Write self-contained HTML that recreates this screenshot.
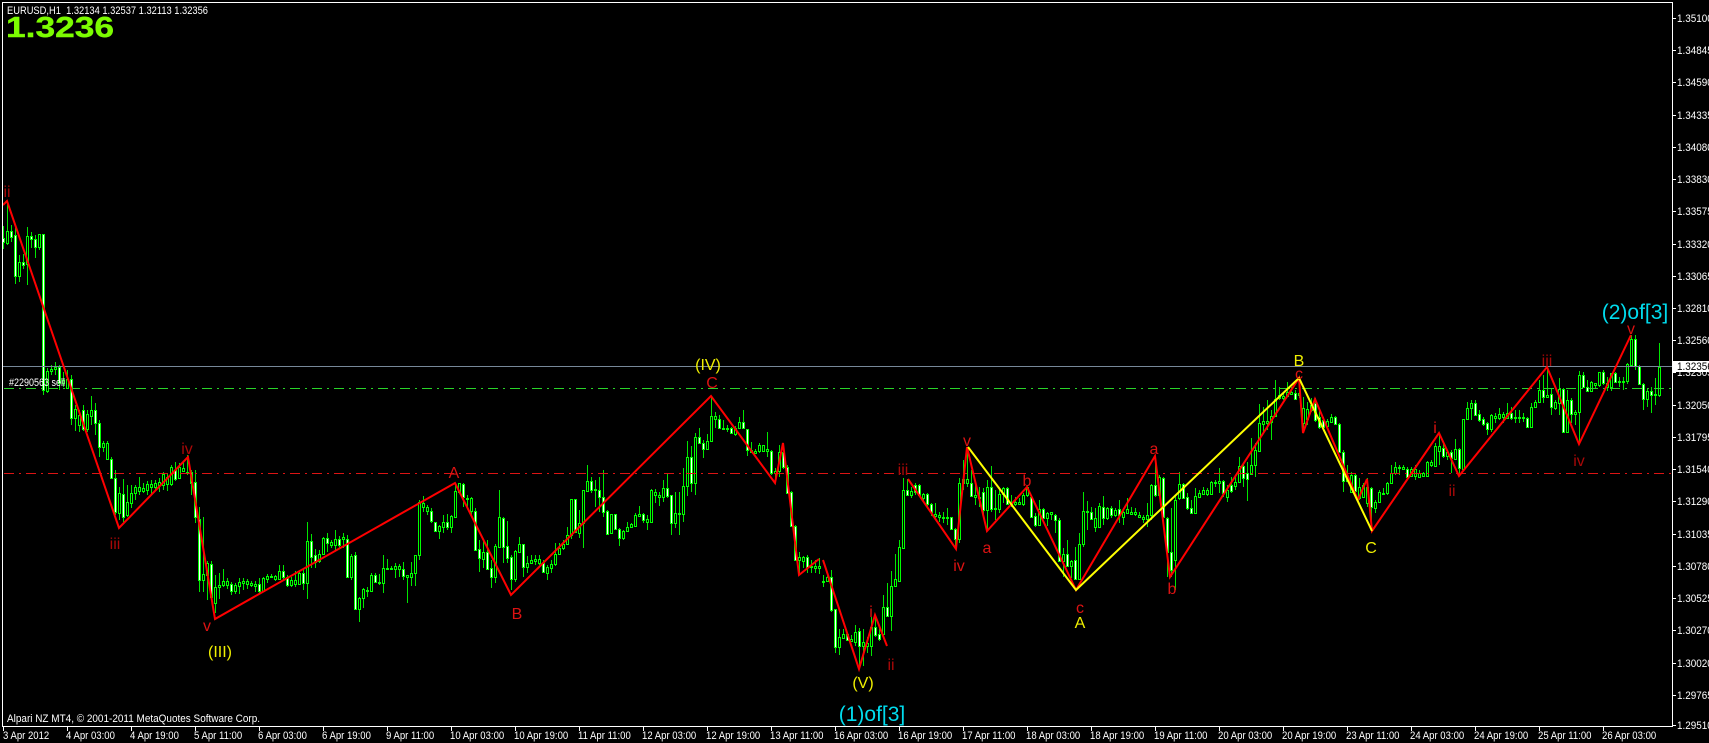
<!DOCTYPE html>
<html><head><meta charset="utf-8"><title>EURUSD,H1</title>
<style>
html,body{margin:0;padding:0;background:#000;width:1709px;height:743px;overflow:hidden}
svg{position:absolute;left:0;top:0;display:block}
text{font-family:"Liberation Sans",sans-serif}
.w{fill:#fff;font-size:11px}
.r{fill:#dc1212;font-size:16px;text-anchor:middle}
.d{fill:#a80808;font-size:16px;text-anchor:middle}
.y{fill:#f0f000;font-size:16px;text-anchor:middle}
.c{fill:#00dcee;font-size:21px;text-anchor:middle}
</style></head><body>
<svg xmlns="http://www.w3.org/2000/svg" width="1709" height="743" viewBox="0 0 1709 743">
<rect width="1709" height="743" fill="#000"/>
<g shape-rendering="crispEdges">
<path stroke="#00e600" fill="none" d="M3.5 226V249M7.5 201V245M11.5 225V242M15.5 228V284M19.5 255V282M23.5 254V269M27.5 227V285M31.5 232V248M35.5 235V258M39.5 234V250M43.5 234V395M47.5 368V393M51.5 365V375M55.5 362V375M59.5 365V390M63.5 372V387M67.5 370V388M71.5 375V425M75.5 405V431M79.5 410V432M83.5 405V431M87.5 410V432M91.5 396V425M95.5 403V435M99.5 420V457M103.5 441V452M107.5 441V460M111.5 457V478M115.5 470V515M119.5 487V520M123.5 479V522M127.5 485V517M131.5 485V508M135.5 485V500M139.5 477V495M143.5 483V493M147.5 481V495M151.5 480V495M155.5 480V490M159.5 478V492M163.5 472V490M167.5 473V491M171.5 465V486M175.5 462V481M179.5 463V479M183.5 462V472M187.5 455V475M191.5 470V495M195.5 470V523M199.5 507V592M203.5 517V592M207.5 561V600M211.5 561V600M215.5 575V613M219.5 573V599M223.5 569V587M227.5 578V589M231.5 582V595M235.5 583V594M239.5 578V594M243.5 578V590M247.5 579V589M251.5 581V587M255.5 581V592M259.5 578V593M263.5 577V592M267.5 574V583M271.5 574V578M275.5 575V581M279.5 565V580M283.5 565V580M287.5 575V587M291.5 577V587M295.5 571V587M299.5 570V585M303.5 568V590M307.5 522V599M311.5 534V568M315.5 549V568M319.5 550V563M323.5 537V555M327.5 533V552M331.5 540V548M335.5 530V550M339.5 536V548M343.5 533V548M347.5 535V578M351.5 554V580M355.5 552V609M359.5 597V622M363.5 588V608M367.5 587V597M371.5 573V592M375.5 573V583M379.5 574V585M383.5 555V593M387.5 559V569M391.5 566V569M395.5 563V578M399.5 564V577M403.5 562V580M407.5 575V603M411.5 562V586M415.5 555V586M419.5 500V560M423.5 496V512M427.5 505V515M431.5 508V523M435.5 522V532M439.5 525V539M443.5 515V533M447.5 514V530M451.5 515V533M455.5 483V517M459.5 483V493M463.5 483V507M467.5 495V507M471.5 497V517M475.5 508V551M479.5 540V572M483.5 540V568M487.5 540V570M491.5 560V588M495.5 544V583M499.5 490V547M503.5 517V563M507.5 521V563M511.5 555V590M515.5 550V582M519.5 537V553M523.5 544V577M527.5 556V573M531.5 555V564M535.5 555V565M539.5 555V565M543.5 560V573M547.5 565V580M551.5 560V573M555.5 543V566M559.5 543V554M563.5 540V550M567.5 527V545M571.5 499V539M575.5 499V533M579.5 510V538M583.5 490V548M587.5 465V491M591.5 477V493M595.5 480V507M599.5 477V512M603.5 470V517M607.5 510V535M611.5 514V534M615.5 514V530M619.5 528V546M623.5 530V540M627.5 522V532M631.5 523V528M635.5 513V527M639.5 506V517M643.5 513V523M647.5 515V530M651.5 489V522M655.5 489V503M659.5 492V506M663.5 480V502M667.5 473V498M671.5 495V535M675.5 492V528M679.5 492V535M683.5 468V522M687.5 441V496M691.5 446V492M695.5 433V495M699.5 428V444M703.5 440V458M707.5 434V450M711.5 396V441M715.5 412V428M719.5 415V428M723.5 420V430M727.5 425V432M731.5 427V434M735.5 426V436M739.5 417V429M743.5 410V429M747.5 429V456M751.5 442V453M755.5 449V454M759.5 443V453M763.5 445V452M767.5 432V457M771.5 450V475M775.5 468V483M779.5 445V477M783.5 443V469M787.5 465V493M791.5 491V527M795.5 525V561M799.5 552V575M803.5 556V568M807.5 555V573M811.5 560V573M815.5 560V573M819.5 558V574M823.5 575V587M827.5 575V582M831.5 570V612M835.5 609V653M839.5 629V655M843.5 629V639M847.5 633V641M851.5 635V642M855.5 625V646M859.5 628V667M863.5 629V666M867.5 637V653M871.5 617V656M875.5 617V637M879.5 627V641M883.5 595V635M887.5 583V617M891.5 571V631M895.5 554V587M899.5 540V582M903.5 478V549M907.5 479V496M911.5 487V498M915.5 483V495M919.5 484V497M923.5 493V501M927.5 493V508M931.5 503V516M935.5 503V520M939.5 512V522M943.5 512V523M947.5 508V525M951.5 517V530M955.5 528V549M959.5 478V543M963.5 460V490M967.5 447V487M971.5 470V497M975.5 482V505M979.5 487V507M983.5 488V518M987.5 480V531M991.5 466V512M995.5 490V520M999.5 488V513M1003.5 487V503M1007.5 487V505M1011.5 495V507M1015.5 497V506M1019.5 498V505M1023.5 493V506M1027.5 487V497M1031.5 495V518M1035.5 513V527M1039.5 500V526M1043.5 508V519M1047.5 512V526M1051.5 512V520M1055.5 514V533M1059.5 518V562M1063.5 548V577M1067.5 540V567M1071.5 560V578M1075.5 547V580M1079.5 533V580M1083.5 492V547M1087.5 501V530M1091.5 507V520M1095.5 508V532M1099.5 503V528M1103.5 496V525M1107.5 507V520M1111.5 506V518M1115.5 508V517M1119.5 500V523M1123.5 508V525M1127.5 498V514M1131.5 507V515M1135.5 508V516M1139.5 512V518M1143.5 515V523M1147.5 503V527M1151.5 484V520M1155.5 456V497M1159.5 475V497M1163.5 477V518M1167.5 517V577M1171.5 508V577M1175.5 495V590M1179.5 472V500M1183.5 483V499M1187.5 493V510M1191.5 500V514M1195.5 488V514M1199.5 490V498M1203.5 487V495M1207.5 488V496M1211.5 481V495M1215.5 480V487M1219.5 468V493M1223.5 480V497M1227.5 485V502M1231.5 477V493M1235.5 477V490M1239.5 457V483M1243.5 463V487M1247.5 462V501M1251.5 438V475M1255.5 443V477M1259.5 404V452M1263.5 407V433M1267.5 400V430M1271.5 410V440M1275.5 380V417M1279.5 387V400M1283.5 392V400M1287.5 382V397M1291.5 387V395M1295.5 390V400M1299.5 378V398M1303.5 397V433M1307.5 402V425M1311.5 398V412M1315.5 398V422M1319.5 410V429M1323.5 417V428M1327.5 419V427M1331.5 414V423M1335.5 416V425M1339.5 423V453M1343.5 450V492M1347.5 465V482M1351.5 472V493M1355.5 473V495M1359.5 478V500M1363.5 483V498M1367.5 478V507M1371.5 487V530M1375.5 500V513M1379.5 490V503M1383.5 488V495M1387.5 482V495M1391.5 465V484M1395.5 462V475M1399.5 465V475M1403.5 465V470M1407.5 467V478M1411.5 467V477M1415.5 465V480M1419.5 470V478M1423.5 472V477M1427.5 461V477M1431.5 460V467M1435.5 443V467M1439.5 433V465M1443.5 442V458M1447.5 450V460M1451.5 450V473M1455.5 439V460M1459.5 448V474M1463.5 419V470M1467.5 402V420M1471.5 400V420M1475.5 400V416M1479.5 410V422M1483.5 417V426M1487.5 422V435M1491.5 414V432M1495.5 413V423M1499.5 408V420M1503.5 412V423M1507.5 403V419M1511.5 407V420M1515.5 410V423M1519.5 410V423M1523.5 413V422M1527.5 417V428M1531.5 403V428M1535.5 400V408M1539.5 380V403M1543.5 375V403M1547.5 367V398M1551.5 388V415M1555.5 400V410M1559.5 378V415M1563.5 388V433M1567.5 390V433M1571.5 398V423M1575.5 410V425M1579.5 371V444M1583.5 372V388M1587.5 380V392M1591.5 381V392M1595.5 383V388M1599.5 372V387M1603.5 370V385M1607.5 377V391M1611.5 373V391M1615.5 372V383M1619.5 377V387M1623.5 377V390M1627.5 363V384M1631.5 335V366M1635.5 335V370M1639.5 365V385M1643.5 383V410M1647.5 388V407M1651.5 387V413M1655.5 378V405M1659.5 343V397"/>
<path stroke="#00ff00" fill="#000" d="M2.5 238.5h2v4h-2zM6.5 231.5h2v12h-2zM10.5 231.5h2v6h-2zM14.5 235.5h2v41h-2zM18.5 262.5h2v14h-2zM22.5 262.5h2v3h-2zM26.5 236.5h2v28h-2zM30.5 236.5h2v3h-2zM34.5 239.5h2v8h-2zM38.5 234.5h2v13h-2zM42.5 234.5h2v156h-2zM46.5 371.5h2v20h-2zM50.5 369.5h2v2h-2zM54.5 367.5h2v2h-2zM58.5 367.5h2v16h-2zM62.5 380.5h2v3h-2zM66.5 379.5h2v9h-2zM70.5 379.5h2v39h-2zM74.5 409.5h2v9h-2zM78.5 415.5h2v10h-2zM82.5 410.5h2v19h-2zM86.5 414.5h2v15h-2zM90.5 410.5h2v6h-2zM94.5 410.5h2v13h-2zM98.5 423.5h2v24h-2zM102.5 443.5h2v4h-2zM106.5 443.5h2v16h-2zM110.5 459.5h2v19h-2zM114.5 478.5h2v34h-2zM118.5 493.5h2v20h-2zM122.5 494.5h2v23h-2zM126.5 502.5h2v13h-2zM130.5 493.5h2v10h-2zM134.5 487.5h2v6h-2zM138.5 487.5h2v4h-2zM142.5 488.5h2v3h-2zM146.5 484.5h2v6h-2zM150.5 484.5h2v3h-2zM154.5 483.5h2v4h-2zM158.5 482.5h2v3h-2zM162.5 474.5h2v11h-2zM166.5 477.5h2v7h-2zM170.5 467.5h2v17h-2zM174.5 470.5h2v9h-2zM178.5 467.5h2v11h-2zM182.5 468.5h2v3h-2zM186.5 472.5h2v1h-2zM190.5 472.5h2v11h-2zM194.5 482.5h2v35h-2zM198.5 519.5h2v61h-2zM202.5 574.5h2v6h-2zM206.5 563.5h2v12h-2zM210.5 564.5h2v33h-2zM214.5 587.5h2v16h-2zM218.5 585.5h2v2h-2zM222.5 581.5h2v4h-2zM226.5 581.5h2v4h-2zM230.5 584.5h2v7h-2zM234.5 585.5h2v6h-2zM238.5 582.5h2v4h-2zM242.5 581.5h2v2h-2zM246.5 581.5h2v3h-2zM250.5 583.5h2v2h-2zM254.5 584.5h2v2h-2zM258.5 584.5h2v7h-2zM262.5 578.5h2v13h-2zM266.5 576.5h2v3h-2zM270.5 576.5h2v1h-2zM274.5 576.5h2v3h-2zM278.5 571.5h2v8h-2zM282.5 571.5h2v6h-2zM286.5 577.5h2v8h-2zM290.5 580.5h2v5h-2zM294.5 580.5h2v4h-2zM298.5 573.5h2v11h-2zM302.5 573.5h2v10h-2zM306.5 541.5h2v42h-2zM310.5 541.5h2v16h-2zM314.5 555.5h2v7h-2zM318.5 554.5h2v7h-2zM322.5 538.5h2v16h-2zM326.5 538.5h2v5h-2zM330.5 542.5h2v3h-2zM334.5 539.5h2v6h-2zM338.5 539.5h2v6h-2zM342.5 537.5h2v2h-2zM346.5 539.5h2v38h-2zM350.5 556.5h2v21h-2zM354.5 555.5h2v54h-2zM358.5 598.5h2v11h-2zM362.5 589.5h2v9h-2zM366.5 590.5h2v1h-2zM370.5 575.5h2v16h-2zM374.5 575.5h2v7h-2zM378.5 582.5h2v1h-2zM382.5 568.5h2v15h-2zM386.5 568.5h2v1h-2zM390.5 568.5h2v1h-2zM394.5 566.5h2v3h-2zM398.5 566.5h2v3h-2zM402.5 569.5h2v7h-2zM406.5 575.5h2v2h-2zM410.5 573.5h2v4h-2zM414.5 555.5h2v18h-2zM418.5 502.5h2v53h-2zM422.5 503.5h2v4h-2zM426.5 507.5h2v4h-2zM430.5 511.5h2v10h-2zM434.5 522.5h2v9h-2zM438.5 526.5h2v5h-2zM442.5 522.5h2v5h-2zM446.5 522.5h2v5h-2zM450.5 516.5h2v11h-2zM454.5 491.5h2v26h-2zM458.5 483.5h2v9h-2zM462.5 484.5h2v13h-2zM466.5 498.5h2v1h-2zM470.5 498.5h2v13h-2zM474.5 511.5h2v39h-2zM478.5 549.5h2v9h-2zM482.5 552.5h2v7h-2zM486.5 552.5h2v17h-2zM490.5 568.5h2v9h-2zM494.5 546.5h2v31h-2zM498.5 517.5h2v30h-2zM502.5 518.5h2v29h-2zM506.5 546.5h2v12h-2zM510.5 557.5h2v22h-2zM514.5 551.5h2v28h-2zM518.5 544.5h2v8h-2zM522.5 544.5h2v23h-2zM526.5 563.5h2v4h-2zM530.5 560.5h2v3h-2zM534.5 559.5h2v2h-2zM538.5 559.5h2v4h-2zM542.5 563.5h2v9h-2zM546.5 567.5h2v6h-2zM550.5 564.5h2v4h-2zM554.5 554.5h2v10h-2zM558.5 548.5h2v6h-2zM562.5 544.5h2v4h-2zM566.5 535.5h2v9h-2zM570.5 499.5h2v36h-2zM574.5 499.5h2v33h-2zM578.5 523.5h2v10h-2zM582.5 490.5h2v33h-2zM586.5 481.5h2v10h-2zM590.5 481.5h2v9h-2zM594.5 489.5h2v1h-2zM598.5 490.5h2v7h-2zM602.5 497.5h2v15h-2zM606.5 511.5h2v23h-2zM610.5 514.5h2v19h-2zM614.5 514.5h2v15h-2zM618.5 529.5h2v9h-2zM622.5 531.5h2v7h-2zM626.5 527.5h2v4h-2zM630.5 524.5h2v3h-2zM634.5 515.5h2v11h-2zM638.5 514.5h2v2h-2zM642.5 514.5h2v6h-2zM646.5 519.5h2v3h-2zM650.5 490.5h2v32h-2zM654.5 492.5h2v3h-2zM658.5 495.5h2v2h-2zM662.5 488.5h2v9h-2zM666.5 488.5h2v8h-2zM670.5 495.5h2v28h-2zM674.5 513.5h2v10h-2zM678.5 513.5h2v1h-2zM682.5 486.5h2v28h-2zM686.5 457.5h2v29h-2zM690.5 457.5h2v26h-2zM694.5 437.5h2v46h-2zM698.5 437.5h2v6h-2zM702.5 443.5h2v6h-2zM706.5 441.5h2v8h-2zM710.5 416.5h2v25h-2zM714.5 416.5h2v3h-2zM718.5 419.5h2v9h-2zM722.5 428.5h2v1h-2zM726.5 428.5h2v1h-2zM730.5 428.5h2v5h-2zM734.5 428.5h2v6h-2zM738.5 422.5h2v6h-2zM742.5 422.5h2v6h-2zM746.5 429.5h2v21h-2zM750.5 450.5h2v2h-2zM754.5 451.5h2v2h-2zM758.5 445.5h2v6h-2zM762.5 445.5h2v6h-2zM766.5 449.5h2v2h-2zM770.5 451.5h2v22h-2zM774.5 471.5h2v2h-2zM778.5 452.5h2v19h-2zM782.5 452.5h2v15h-2zM786.5 467.5h2v26h-2zM790.5 492.5h2v34h-2zM794.5 526.5h2v34h-2zM798.5 557.5h2v3h-2zM802.5 557.5h2v4h-2zM806.5 557.5h2v10h-2zM810.5 566.5h2v1h-2zM814.5 566.5h2v2h-2zM818.5 566.5h2v2h-2zM822.5 581.5h2v1h-2zM826.5 577.5h2v4h-2zM830.5 577.5h2v33h-2zM834.5 609.5h2v38h-2zM838.5 637.5h2v10h-2zM842.5 634.5h2v4h-2zM846.5 634.5h2v6h-2zM850.5 639.5h2v2h-2zM854.5 632.5h2v10h-2zM858.5 631.5h2v15h-2zM862.5 642.5h2v4h-2zM866.5 643.5h2v3h-2zM870.5 627.5h2v19h-2zM874.5 627.5h2v8h-2zM878.5 634.5h2v5h-2zM882.5 607.5h2v27h-2zM886.5 607.5h2v9h-2zM890.5 586.5h2v30h-2zM894.5 579.5h2v7h-2zM898.5 547.5h2v34h-2zM902.5 490.5h2v58h-2zM906.5 490.5h2v5h-2zM910.5 491.5h2v4h-2zM914.5 485.5h2v7h-2zM918.5 485.5h2v10h-2zM922.5 494.5h2v4h-2zM926.5 494.5h2v10h-2zM930.5 504.5h2v8h-2zM934.5 514.5h2v2h-2zM938.5 515.5h2v2h-2zM942.5 517.5h2v1h-2zM946.5 517.5h2v1h-2zM950.5 517.5h2v12h-2zM954.5 529.5h2v10h-2zM958.5 483.5h2v56h-2zM962.5 479.5h2v4h-2zM966.5 479.5h2v4h-2zM970.5 483.5h2v13h-2zM974.5 495.5h2v2h-2zM978.5 497.5h2v1h-2zM982.5 492.5h2v18h-2zM986.5 487.5h2v23h-2zM990.5 487.5h2v22h-2zM994.5 508.5h2v1h-2zM998.5 494.5h2v15h-2zM1002.5 488.5h2v6h-2zM1006.5 488.5h2v16h-2zM1010.5 503.5h2v1h-2zM1014.5 502.5h2v2h-2zM1018.5 502.5h2v2h-2zM1022.5 495.5h2v9h-2zM1026.5 487.5h2v8h-2zM1030.5 497.5h2v20h-2zM1034.5 516.5h2v9h-2zM1038.5 509.5h2v16h-2zM1042.5 509.5h2v9h-2zM1046.5 513.5h2v5h-2zM1050.5 512.5h2v2h-2zM1054.5 515.5h2v5h-2zM1058.5 520.5h2v41h-2zM1062.5 554.5h2v7h-2zM1066.5 554.5h2v12h-2zM1070.5 561.5h2v5h-2zM1074.5 560.5h2v19h-2zM1078.5 544.5h2v35h-2zM1082.5 511.5h2v33h-2zM1086.5 511.5h2v1h-2zM1090.5 512.5h2v7h-2zM1094.5 518.5h2v9h-2zM1098.5 506.5h2v21h-2zM1102.5 507.5h2v11h-2zM1106.5 508.5h2v10h-2zM1110.5 508.5h2v7h-2zM1114.5 510.5h2v5h-2zM1118.5 509.5h2v6h-2zM1122.5 512.5h2v5h-2zM1126.5 509.5h2v4h-2zM1130.5 512.5h2v2h-2zM1134.5 512.5h2v2h-2zM1138.5 515.5h2v2h-2zM1142.5 517.5h2v2h-2zM1146.5 515.5h2v4h-2zM1150.5 485.5h2v30h-2zM1154.5 485.5h2v10h-2zM1158.5 477.5h2v18h-2zM1162.5 478.5h2v39h-2zM1166.5 518.5h2v34h-2zM1170.5 552.5h2v18h-2zM1174.5 500.5h2v60h-2zM1178.5 484.5h2v14h-2zM1182.5 484.5h2v14h-2zM1186.5 497.5h2v11h-2zM1190.5 508.5h2v5h-2zM1194.5 496.5h2v17h-2zM1198.5 493.5h2v4h-2zM1202.5 490.5h2v4h-2zM1206.5 490.5h2v4h-2zM1210.5 482.5h2v12h-2zM1214.5 482.5h2v1h-2zM1218.5 481.5h2v2h-2zM1222.5 481.5h2v12h-2zM1226.5 490.5h2v7h-2zM1230.5 485.5h2v6h-2zM1234.5 482.5h2v4h-2zM1238.5 466.5h2v16h-2zM1242.5 466.5h2v12h-2zM1246.5 473.5h2v6h-2zM1250.5 465.5h2v9h-2zM1254.5 450.5h2v15h-2zM1258.5 423.5h2v28h-2zM1262.5 421.5h2v3h-2zM1266.5 421.5h2v2h-2zM1270.5 416.5h2v6h-2zM1274.5 399.5h2v17h-2zM1278.5 395.5h2v3h-2zM1282.5 396.5h2v2h-2zM1286.5 392.5h2v4h-2zM1290.5 392.5h2v2h-2zM1294.5 393.5h2v6h-2zM1298.5 393.5h2v2h-2zM1302.5 408.5h2v15h-2zM1306.5 409.5h2v10h-2zM1310.5 405.5h2v5h-2zM1314.5 403.5h2v17h-2zM1318.5 417.5h2v10h-2zM1322.5 420.5h2v7h-2zM1326.5 421.5h2v5h-2zM1330.5 417.5h2v5h-2zM1334.5 417.5h2v7h-2zM1338.5 424.5h2v28h-2zM1342.5 452.5h2v29h-2zM1346.5 476.5h2v5h-2zM1350.5 475.5h2v17h-2zM1354.5 475.5h2v16h-2zM1358.5 487.5h2v11h-2zM1362.5 485.5h2v12h-2zM1366.5 487.5h2v16h-2zM1370.5 488.5h2v19h-2zM1374.5 502.5h2v6h-2zM1378.5 492.5h2v10h-2zM1382.5 493.5h2v1h-2zM1386.5 483.5h2v10h-2zM1390.5 473.5h2v10h-2zM1394.5 467.5h2v6h-2zM1398.5 467.5h2v1h-2zM1402.5 467.5h2v2h-2zM1406.5 469.5h2v8h-2zM1410.5 469.5h2v7h-2zM1414.5 469.5h2v7h-2zM1418.5 473.5h2v4h-2zM1422.5 473.5h2v3h-2zM1426.5 462.5h2v14h-2zM1430.5 462.5h2v3h-2zM1434.5 446.5h2v20h-2zM1438.5 446.5h2v5h-2zM1442.5 448.5h2v8h-2zM1446.5 452.5h2v4h-2zM1450.5 452.5h2v6h-2zM1454.5 449.5h2v10h-2zM1458.5 449.5h2v19h-2zM1462.5 419.5h2v50h-2zM1466.5 408.5h2v11h-2zM1470.5 403.5h2v5h-2zM1474.5 403.5h2v12h-2zM1478.5 414.5h2v6h-2zM1482.5 419.5h2v5h-2zM1486.5 423.5h2v6h-2zM1490.5 415.5h2v14h-2zM1494.5 416.5h2v2h-2zM1498.5 414.5h2v4h-2zM1502.5 414.5h2v3h-2zM1506.5 413.5h2v5h-2zM1510.5 413.5h2v5h-2zM1514.5 417.5h2v1h-2zM1518.5 417.5h2v1h-2zM1522.5 417.5h2v1h-2zM1526.5 418.5h2v9h-2zM1530.5 407.5h2v20h-2zM1534.5 402.5h2v5h-2zM1538.5 390.5h2v12h-2zM1542.5 390.5h2v7h-2zM1546.5 395.5h2v2h-2zM1550.5 394.5h2v13h-2zM1554.5 402.5h2v6h-2zM1558.5 389.5h2v14h-2zM1562.5 389.5h2v43h-2zM1566.5 400.5h2v32h-2zM1570.5 400.5h2v14h-2zM1574.5 412.5h2v2h-2zM1578.5 375.5h2v37h-2zM1582.5 375.5h2v12h-2zM1586.5 387.5h2v4h-2zM1590.5 382.5h2v9h-2zM1594.5 383.5h2v2h-2zM1598.5 372.5h2v13h-2zM1602.5 372.5h2v11h-2zM1606.5 383.5h2v4h-2zM1610.5 373.5h2v14h-2zM1614.5 373.5h2v9h-2zM1618.5 381.5h2v1h-2zM1622.5 381.5h2v1h-2zM1626.5 364.5h2v17h-2zM1630.5 339.5h2v26h-2zM1634.5 339.5h2v27h-2zM1638.5 366.5h2v18h-2zM1642.5 384.5h2v15h-2zM1646.5 391.5h2v8h-2zM1650.5 391.5h2v4h-2zM1654.5 394.5h2v1h-2zM1658.5 367.5h2v28h-2z"/>
<path stroke="#fff" fill="none" d="M3.5 239V242M11.5 232V237M15.5 236V276M23.5 263V265M31.5 237V239M35.5 240V247M43.5 235V390M59.5 368V383M71.5 380V418M83.5 411V429M95.5 411V423M99.5 424V447M111.5 460V478M115.5 479V512M123.5 495V517M175.5 471V479M191.5 473V483M195.5 483V517M199.5 520V580M211.5 565V597M231.5 585V591M259.5 585V591M283.5 572V577M287.5 578V585M303.5 574V583M311.5 542V557M315.5 556V562M327.5 539V543M339.5 540V545M347.5 540V577M355.5 556V609M375.5 576V582M403.5 570V576M431.5 512V521M435.5 523V531M447.5 523V527M463.5 485V497M475.5 512V550M479.5 550V558M487.5 553V569M491.5 569V577M503.5 519V547M507.5 547V558M511.5 558V579M523.5 545V567M543.5 564V572M575.5 500V532M591.5 482V490M599.5 491V497M603.5 498V512M607.5 512V534M615.5 515V529M619.5 530V538M643.5 515V520M667.5 489V496M671.5 496V523M691.5 458V483M699.5 438V443M703.5 444V449M719.5 420V428M731.5 429V433M743.5 423V428M747.5 430V450M771.5 452V473M783.5 453V467M787.5 468V493M791.5 493V526M795.5 527V560M807.5 558V567M831.5 578V610M835.5 610V647M847.5 635V640M859.5 632V646M875.5 628V635M879.5 635V639M887.5 608V616M907.5 491V495M915.5 486V492M919.5 486V495M927.5 495V504M931.5 505V512M951.5 518V529M955.5 530V539M971.5 484V496M983.5 493V510M991.5 488V509M1007.5 489V504M1031.5 498V517M1035.5 517V525M1043.5 510V518M1055.5 516V520M1059.5 521V561M1067.5 555V566M1075.5 561V579M1091.5 513V519M1103.5 508V518M1111.5 509V515M1119.5 510V515M1155.5 486V495M1163.5 479V517M1167.5 519V552M1171.5 553V570M1183.5 485V498M1187.5 498V508M1191.5 509V513M1223.5 482V493M1231.5 486V491M1243.5 467V478M1247.5 474V479M1295.5 394V399M1315.5 404V420M1319.5 418V427M1323.5 421V427M1335.5 418V424M1339.5 425V452M1343.5 453V481M1355.5 476V491M1371.5 489V507M1407.5 470V477M1443.5 449V456M1451.5 453V458M1459.5 450V468M1475.5 404V415M1479.5 415V420M1483.5 420V424M1487.5 424V429M1511.5 414V418M1527.5 419V427M1543.5 391V397M1551.5 395V407M1563.5 390V432M1571.5 401V414M1583.5 376V387M1587.5 388V391M1603.5 373V383M1615.5 374V382M1635.5 340V366M1639.5 367V384M1643.5 385V399M1651.5 392V395"/>
</g>
<g fill="none" shape-rendering="crispEdges" stroke-width="1">
<path d="M3 366.5H1672" stroke="#778899"/>
<path d="M4 388.5H1672" stroke="#28d428" stroke-dasharray="10 5 2 5"/>
<path d="M4 473.5H1672" stroke="#dc1414" stroke-dasharray="10 5 2 5"/>
</g>
<g fill="none" stroke-width="2" stroke-linejoin="miter">
<polyline stroke="#f00" points="3,205 7,201 119,528 188,457 215,619 455,483 511,595 711,396 775,483 783,443 799,575 819,559"/>
<polyline stroke="#f00" points="823,560 859,669 875,615 887,646"/>
<polyline stroke="#f00" points="908,479 956,549 967,447 987,531 1027,487 1076,590 1155,456 1170,577 1299,378 1303,433 1315,399 1358,500 1367,479 1372,531 1439,433 1459,476 1547,367 1579,444 1631,335"/>
<polyline stroke="#ff0" points="968,447 1076,590 1299,378 1372,531"/>
</g>
<g stroke="#fff" fill="none" shape-rendering="crispEdges">
<path d="M2.5 2V727M2 2.5H1673M1672.5 2V727M2 726.5H1673" stroke-width="1"/>
<path d="M1672 18.5h4M1672 50.5h4M1672 82.5h4M1672 115.5h4M1672 147.5h4M1672 179.5h4M1672 211.5h4M1672 244.5h4M1672 276.5h4M1672 308.5h4M1672 340.5h4M1672 372.5h4M1672 405.5h4M1672 437.5h4M1672 469.5h4M1672 501.5h4M1672 534.5h4M1672 566.5h4M1672 598.5h4M1672 630.5h4M1672 663.5h4M1672 695.5h4M1672 725.5h4"/>
<path d="M3.5 727v4M67.5 727v4M131.5 727v4M195.5 727v4M259.5 727v4M323.5 727v4M387.5 727v4M451.5 727v4M515.5 727v4M579.5 727v4M643.5 727v4M707.5 727v4M771.5 727v4M835.5 727v4M899.5 727v4M963.5 727v4M1027.5 727v4M1091.5 727v4M1155.5 727v4M1219.5 727v4M1283.5 727v4M1347.5 727v4M1411.5 727v4M1475.5 727v4M1539.5 727v4M1603.5 727v4"/>
</g>
<text class="w" x="7" y="14" textLength="201" lengthAdjust="spacingAndGlyphs" xml:space="preserve">EURUSD,H1  1.32134 1.32537 1.32113 1.32356</text>
<text x="6" y="37" font-size="29" font-weight="bold" fill="#7cfc00" stroke="#7cfc00" stroke-width=".4" textLength="108" lengthAdjust="spacingAndGlyphs">1.3236</text>
<text class="w" x="9" y="386" textLength="56" lengthAdjust="spacingAndGlyphs">#2290563 sell</text>
<text class="w" x="7" y="722" textLength="253" lengthAdjust="spacingAndGlyphs">Alpari NZ MT4, © 2001-2011 MetaQuotes Software Corp.</text>
<g fill="#fff" font-size="11">
<text transform="matrix(.9 0 0 1 1677 22)">1.35100</text>
<text transform="matrix(.9 0 0 1 1677 54)">1.34845</text>
<text transform="matrix(.9 0 0 1 1677 86)">1.34590</text>
<text transform="matrix(.9 0 0 1 1677 119)">1.34335</text>
<text transform="matrix(.9 0 0 1 1677 151)">1.34080</text>
<text transform="matrix(.9 0 0 1 1677 183)">1.33830</text>
<text transform="matrix(.9 0 0 1 1677 215)">1.33575</text>
<text transform="matrix(.9 0 0 1 1677 248)">1.33320</text>
<text transform="matrix(.9 0 0 1 1677 280)">1.33065</text>
<text transform="matrix(.9 0 0 1 1677 312)">1.32810</text>
<text transform="matrix(.9 0 0 1 1677 344)">1.32560</text>
<text transform="matrix(.9 0 0 1 1677 376)">1.32305</text>
<text transform="matrix(.9 0 0 1 1677 409)">1.32050</text>
<text transform="matrix(.9 0 0 1 1677 441)">1.31795</text>
<text transform="matrix(.9 0 0 1 1677 473)">1.31540</text>
<text transform="matrix(.9 0 0 1 1677 505)">1.31290</text>
<text transform="matrix(.9 0 0 1 1677 538)">1.31035</text>
<text transform="matrix(.9 0 0 1 1677 570)">1.30780</text>
<text transform="matrix(.9 0 0 1 1677 602)">1.30525</text>
<text transform="matrix(.9 0 0 1 1677 634)">1.30270</text>
<text transform="matrix(.9 0 0 1 1677 667)">1.30020</text>
<text transform="matrix(.9 0 0 1 1677 699)">1.29765</text>
<text transform="matrix(.9 0 0 1 1677 729)">1.29510</text>
</g>
<rect x="1673" y="361" width="36" height="11" fill="#fff"/>
<text transform="matrix(.9 0 0 1 1677 370)" fill="#000" font-size="11">1.32356</text>
<g fill="#fff" font-size="11">
<text transform="matrix(.87 0 0 1 3 739)">3 Apr 2012</text>
<text transform="matrix(.87 0 0 1 66 739)">4 Apr 03:00</text>
<text transform="matrix(.87 0 0 1 130 739)">4 Apr 19:00</text>
<text transform="matrix(.87 0 0 1 194 739)">5 Apr 11:00</text>
<text transform="matrix(.87 0 0 1 258 739)">6 Apr 03:00</text>
<text transform="matrix(.87 0 0 1 322 739)">6 Apr 19:00</text>
<text transform="matrix(.87 0 0 1 386 739)">9 Apr 11:00</text>
<text transform="matrix(.87 0 0 1 450 739)">10 Apr 03:00</text>
<text transform="matrix(.87 0 0 1 514 739)">10 Apr 19:00</text>
<text transform="matrix(.87 0 0 1 578 739)">11 Apr 11:00</text>
<text transform="matrix(.87 0 0 1 642 739)">12 Apr 03:00</text>
<text transform="matrix(.87 0 0 1 706 739)">12 Apr 19:00</text>
<text transform="matrix(.87 0 0 1 770 739)">13 Apr 11:00</text>
<text transform="matrix(.87 0 0 1 834 739)">16 Apr 03:00</text>
<text transform="matrix(.87 0 0 1 898 739)">16 Apr 19:00</text>
<text transform="matrix(.87 0 0 1 962 739)">17 Apr 11:00</text>
<text transform="matrix(.87 0 0 1 1026 739)">18 Apr 03:00</text>
<text transform="matrix(.87 0 0 1 1090 739)">18 Apr 19:00</text>
<text transform="matrix(.87 0 0 1 1154 739)">19 Apr 11:00</text>
<text transform="matrix(.87 0 0 1 1218 739)">20 Apr 03:00</text>
<text transform="matrix(.87 0 0 1 1282 739)">20 Apr 19:00</text>
<text transform="matrix(.87 0 0 1 1346 739)">23 Apr 11:00</text>
<text transform="matrix(.87 0 0 1 1410 739)">24 Apr 03:00</text>
<text transform="matrix(.87 0 0 1 1474 739)">24 Apr 19:00</text>
<text transform="matrix(.87 0 0 1 1538 739)">25 Apr 11:00</text>
<text transform="matrix(.87 0 0 1 1602 739)">26 Apr 03:00</text>
</g>
<text class="d" x="7" y="197">ii</text>
<text class="d" x="115" y="549">iii</text>
<text class="d" x="187" y="454">iv</text>
<text class="r" x="207" y="631">v</text>
<text class="y" x="220" y="657">(III)</text>
<text class="r" x="454" y="478">A</text>
<text class="r" x="517" y="619">B</text>
<text class="y" x="708" y="370">(IV)</text>
<text class="r" x="712" y="388">C</text>
<text class="r" x="871" y="617">i</text>
<text class="d" x="891" y="670">ii</text>
<text class="y" x="863" y="688">(V)</text>
<text class="c" x="872" y="721">(1)of[3]</text>
<text class="d" x="903" y="475">iii</text>
<text class="r" x="959" y="571">iv</text>
<text class="r" x="967" y="446">v</text>
<text class="r" x="987" y="553">a</text>
<text class="r" x="1027" y="486">b</text>
<text class="r" x="1080" y="613">c</text>
<text class="y" x="1080" y="628">A</text>
<text class="r" x="1154" y="454">a</text>
<text class="r" x="1172" y="594">b</text>
<text class="y" x="1299" y="366">B</text>
<text class="r" x="1299" y="379">c</text>
<text class="y" x="1371" y="553">C</text>
<text class="r" x="1435" y="433">i</text>
<text class="d" x="1452" y="496">ii</text>
<text class="d" x="1547" y="366">iii</text>
<text class="d" x="1579" y="466">iv</text>
<text class="r" x="1631" y="334">v</text>
<text class="c" x="1635" y="319">(2)of[3]</text>
</svg>
</body></html>
